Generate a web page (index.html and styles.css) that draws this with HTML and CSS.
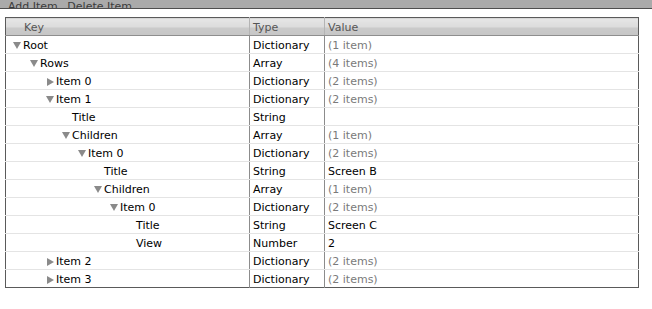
FILE: index.html
```html
<!DOCTYPE html>
<html lang="en">
<head>
    <meta charset="UTF-8">
    <title>Property List</title>
    <link rel="stylesheet" href="styles.css">
</head>
<body>
    <div class="toolbar">
        <span class="tool">Add Item</span>
        <span class="tool">Delete Item</span>
    </div>

    <table class="plist">
        <colgroup>
            <col class="col-key">
            <col class="col-type">
            <col class="col-value">
        </colgroup>
        <tr class="head">
            <th class="key">Key</th>
            <th>Type</th>
            <th>Value</th>
        </tr>
        <tr>
            <td class="key lv0"><i class="tri down"></i>Root</td>
            <td>Dictionary</td><td class="dim">(1 item)</td>
        </tr>
        <tr>
            <td class="key lv1"><i class="tri down"></i>Rows</td>
            <td>Array</td><td class="dim">(4 items)</td>
        </tr>
        <tr>
            <td class="key lv2"><i class="tri right"></i>Item 0</td>
            <td>Dictionary</td><td class="dim">(2 items)</td>
        </tr>
        <tr>
            <td class="key lv2"><i class="tri down"></i>Item 1</td>
            <td>Dictionary</td><td class="dim">(2 items)</td>
        </tr>
        <tr>
            <td class="key lv3"><i class="tri"></i>Title</td>
            <td>String</td><td></td>
        </tr>
        <tr>
            <td class="key lv3"><i class="tri down"></i>Children</td>
            <td>Array</td><td class="dim">(1 item)</td>
        </tr>
        <tr>
            <td class="key lv4"><i class="tri down"></i>Item 0</td>
            <td>Dictionary</td><td class="dim">(2 items)</td>
        </tr>
        <tr>
            <td class="key lv5"><i class="tri"></i>Title</td>
            <td>String</td><td>Screen B</td>
        </tr>
        <tr>
            <td class="key lv5"><i class="tri down"></i>Children</td>
            <td>Array</td><td class="dim">(1 item)</td>
        </tr>
        <tr>
            <td class="key lv6"><i class="tri down"></i>Item 0</td>
            <td>Dictionary</td><td class="dim">(2 items)</td>
        </tr>
        <tr>
            <td class="key lv7"><i class="tri"></i>Title</td>
            <td>String</td><td>Screen C</td>
        </tr>
        <tr>
            <td class="key lv7"><i class="tri"></i>View</td>
            <td>Number</td><td>2</td>
        </tr>
        <tr>
            <td class="key lv2"><i class="tri right"></i>Item 2</td>
            <td>Dictionary</td><td class="dim">(2 items)</td>
        </tr>
        <tr>
            <td class="key lv2"><i class="tri right"></i>Item 3</td>
            <td>Dictionary</td><td class="dim">(2 items)</td>
        </tr>
    </table>
</body>
</html>
```

FILE: styles.css
```css
body{
    margin: 0;
    background: #fff;
    font-family: "DejaVu Sans", "Liberation Sans", sans-serif;
    font-size: 11px;
    color: #000;
}
.toolbar{
    height: 8px;
    overflow: hidden;
    background: #aaaaaa;
    border-bottom: 1px solid #4e4e4e;
    padding-left: 8px;
}
.tool{
    display: inline-block;
    margin-top: -7px;
    margin-right: 6px;
    line-height: 12px;
    color: #3c3c3c;
}
.plist{
    margin: 8px 0 0 5px;
    width: 634px;
    border-collapse: collapse;
    border: 1px solid #5a5a5a;
    table-layout: fixed;
}
.col-key{ width: 244px; }
.col-type{ width: 75px; }
.plist td, .plist th{
    box-sizing: border-box;
    height: 18px;
    padding: 2px 0 0 3px;
    border-bottom: 1px solid #e4e4e4;
    border-left: 1px solid #8c8c8c;
    white-space: nowrap;
    overflow: hidden;
    text-align: left;
    font-weight: normal;
    line-height: 15px;
}
.plist td.key, .plist th.key{
    border-left: none;
}
.head th{
    background: linear-gradient(#e6e6e6, #dcdcdc 50%, #cacaca 51%, #c6c6c6);
    color: #555;
    border-bottom: 1px solid #8e8e8e;
    border-left: 1px solid #b4b4b4;
}
.head th.key{ padding-left: 18px; }
.plist tr:last-child td{ border-bottom: none; }
.dim{ color: #7a7a7a; }

.tri{
    display: inline-block;
    width: 10px;
    height: 8px;
    vertical-align: -1px;
}
.tri.down{
    width: 0;
    height: 0;
    margin-right: 2px;
    border-left: 4px solid transparent;
    border-right: 4px solid transparent;
    border-top: 7px solid #8a8a8a;
    vertical-align: 0;
}
.tri.right{
    width: 0;
    height: 0;
    margin-left: 1px;
    margin-right: 2px;
    border-top: 4px solid transparent;
    border-bottom: 4px solid transparent;
    border-left: 7px solid #8a8a8a;
}
.lv0{ padding-left: 7px !important; }
.lv1{ padding-left: 24px !important; }
.lv2{ padding-left: 40px !important; }
.lv3{ padding-left: 56px !important; }
.lv4{ padding-left: 72px !important; }
.lv5{ padding-left: 88px !important; }
.lv6{ padding-left: 104px !important; }
.lv7{ padding-left: 120px !important; }
```
